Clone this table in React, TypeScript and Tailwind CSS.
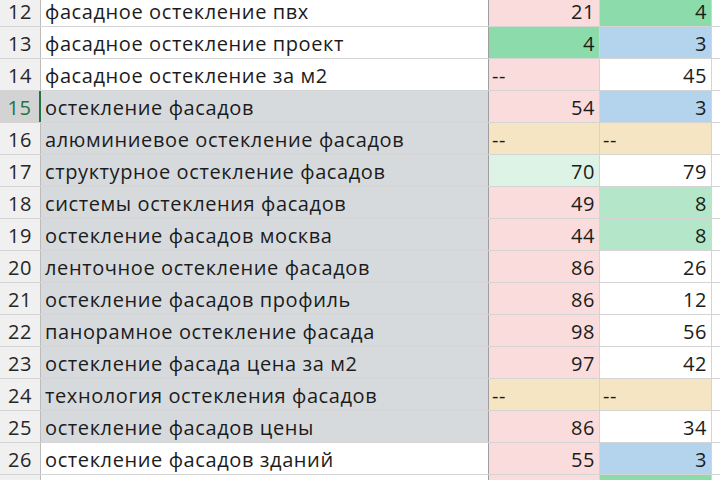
type Tone = "white" | "pink" | "green" | "mint" | "pale" | "blue" | "sand"

interface Row {
    n: number
    text: string
    c: string
    cTone: Tone
    d: string
    dTone: Tone
    grey?: boolean
    active?: boolean
}

const tones: Record<Tone, string> = {
    white: "bg-white",
    pink: "bg-[#f9dcdb]",
    green: "bg-[#8cdcab]",
    mint: "bg-[#b4e7c9]",
    pale: "bg-[#dcf3e6]",
    blue: "bg-[#b4d4ee]",
    sand: "bg-[#f5e5c3]",
}

const rows: Row[] = [
    { n: 12, text: "фасадное остекление пвх", c: "21", cTone: "pink", d: "4", dTone: "green" },
    { n: 13, text: "фасадное остекление проект", c: "4", cTone: "green", d: "3", dTone: "blue" },
    { n: 14, text: "фасадное остекление за м2", c: "--", cTone: "pink", d: "45", dTone: "white" },
    { n: 15, text: "остекление фасадов", c: "54", cTone: "pink", d: "3", dTone: "blue", grey: true, active: true },
    { n: 16, text: "алюминиевое остекление фасадов", c: "--", cTone: "sand", d: "--", dTone: "sand", grey: true },
    { n: 17, text: "структурное остекление фасадов", c: "70", cTone: "pale", d: "79", dTone: "white", grey: true },
    { n: 18, text: "системы остекления фасадов", c: "49", cTone: "pink", d: "8", dTone: "mint", grey: true },
    { n: 19, text: "остекление фасадов москва", c: "44", cTone: "pink", d: "8", dTone: "mint", grey: true },
    { n: 20, text: "ленточное остекление фасадов", c: "86", cTone: "pink", d: "26", dTone: "white", grey: true },
    { n: 21, text: "остекление фасадов профиль", c: "86", cTone: "pink", d: "12", dTone: "white", grey: true },
    { n: 22, text: "панорамное остекление фасада", c: "98", cTone: "pink", d: "56", dTone: "white", grey: true },
    { n: 23, text: "остекление фасада цена за м2", c: "97", cTone: "pink", d: "42", dTone: "white", grey: true },
    { n: 24, text: "технология остекления фасадов", c: "--", cTone: "sand", d: "--", dTone: "sand", grey: true },
    { n: 25, text: "остекление фасадов цены", c: "86", cTone: "pink", d: "34", dTone: "white", grey: true },
    { n: 26, text: "остекление фасадов зданий", c: "55", cTone: "pink", d: "3", dTone: "blue" },
    { n: 27, text: "", c: "", cTone: "pink", d: "", dTone: "green" },
]

const NumCell = ({ value, tone, width }: { value: string; tone: Tone; width: string }) => {
    const dash = value === "--"
    return (
        <div className={`${width} ${tones[tone]} border-r border-[#d4d4d4] flex items-center pt-[2px] ${dash ? "justify-start pl-[3px]" : "justify-end pr-[4px]"}`}>
            {value}
        </div>
    )
}

export default function App() {
    return (
        <div className="w-[720px] h-[480px] overflow-hidden bg-white text-[#1c1c1c]" style={{ fontFamily: '"Open Sans", "Liberation Sans", sans-serif' }}>
            <div className="-mt-[5px]">
                {rows.map((r) => (
                    <div key={r.n} className="flex h-[32px] border-b border-[#d4d4d4] text-[20px] tracking-[0.6px] leading-none">
                        <div className={`w-[41px] shrink-0 flex items-center justify-center pt-[2px] ${r.active ? "bg-[#d3d3d3] text-[#217346] border-r-2 border-[#217346]" : "bg-[#f0f0f0] text-[#262626] border-r border-[#bcbcbc]"}`}>
                            {r.n}
                        </div>
                        <div className={`w-[448px] shrink-0 flex items-center pl-[4px] pt-[2px] border-r border-[#9e9e9e] whitespace-nowrap overflow-hidden ${r.grey ? "bg-[#d7dadd]" : "bg-white"}`}>
                            {r.text}
                        </div>
                        <NumCell value={r.c} tone={r.cTone} width="w-[111px] shrink-0" />
                        <NumCell value={r.d} tone={r.dTone} width="w-[112px] shrink-0" />
                        <div className="flex-1 bg-white" />
                    </div>
                ))}
            </div>
        </div>
    )
}
